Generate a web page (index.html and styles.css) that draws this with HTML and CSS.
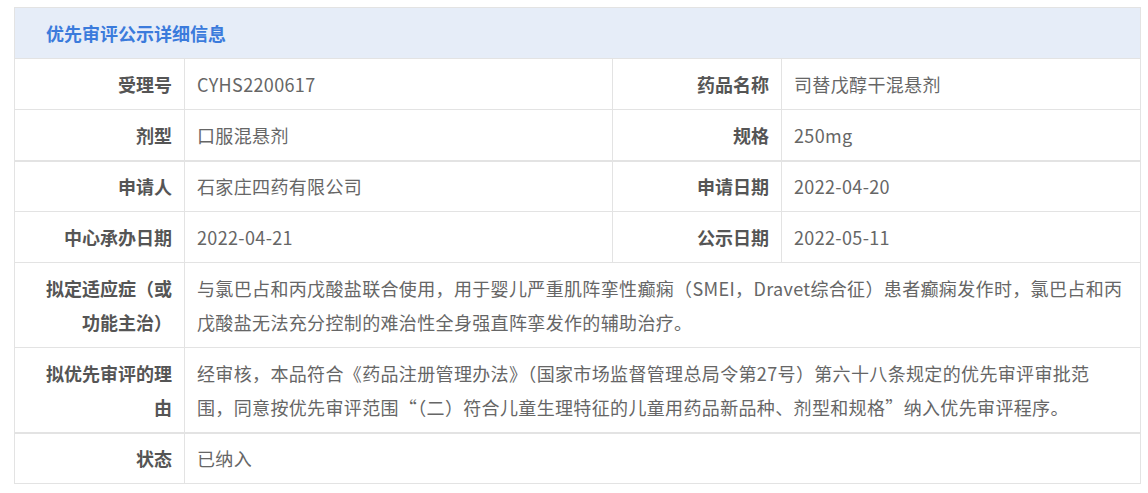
FILE: index.html
```html
<!DOCTYPE html>
<html lang="zh-CN">
<head>
<meta charset="utf-8">
<link rel="stylesheet" href="styles.css">
</head>
<body>
<div class="wrap">
  <table class="info">
    <colgroup>
      <col class="c-label"><col class="c-val"><col class="c-label2"><col>
    </colgroup>
    <thead>
      <tr><th colspan="4" class="title">优先审评公示详细信息</th></tr>
    </thead>
    <tbody>
      <tr>
        <td class="lbl">受理号</td><td class="val">CYHS2200617</td>
        <td class="lbl">药品名称</td><td class="val">司替戊醇干混悬剂</td>
      </tr>
      <tr>
        <td class="lbl">剂型</td><td class="val">口服混悬剂</td>
        <td class="lbl">规格</td><td class="val">250mg</td>
      </tr>
      <tr class="sep">
        <td class="lbl">申请人</td><td class="val">石家庄四药有限公司</td>
        <td class="lbl">申请日期</td><td class="val">2022-04-20</td>
      </tr>
      <tr>
        <td class="lbl">中心承办日期</td><td class="val">2022-04-21</td>
        <td class="lbl">公示日期</td><td class="val">2022-05-11</td>
      </tr>
      <tr>
        <td class="lbl">拟定适应症（或功能主治）</td>
        <td class="val" colspan="3">与氯巴占和丙戊酸盐联合使用，用于婴儿严重肌阵挛性癫痫（SMEI，Dravet综合征）患者癫痫发作时，氯巴占和丙戊酸盐无法充分控制的难治性全身强直阵挛发作的辅助治疗。</td>
      </tr>
      <tr>
        <td class="lbl">拟优先审评的理由</td>
        <td class="val" colspan="3">经审核，本品符合《药品注册管理办法》（国家市场监督管理总局令第27号）第六十八条规定的优先审评审批范围，同意按优先审评范围“（二）符合儿童生理特征的儿童用药品新品种、剂型和规格”纳入优先审评程序。</td>
      </tr>
      <tr class="sep">
        <td class="lbl">状态</td><td class="val" colspan="3">已纳入</td>
      </tr>
    </tbody>
  </table>
</div>
</body>
</html>
```
FILE: styles.css
```css
html, body {
  margin: 0;
  padding: 0;
  background: #ffffff;
}
body {
  font-family: "Noto Sans CJK SC", "Noto Sans", sans-serif;
  font-size: 18px;
}
.wrap {
  padding: 7px 7px 0 14px;
}
.info {
  width: 1127px;
  border-collapse: collapse;
  table-layout: fixed;
  border: 1px solid #e3e3e3;
}
.c-label { width: 170px; }
.c-val { width: 428px; }
.c-label2 { width: 169px; }
.info th, .info td {
  border: 1px solid #e3e3e3;
  line-height: 34px;
  padding: 8px 12px;
  vertical-align: middle;
}
.info .title {
  background: #e6edf8;
  color: #3b7bdc;
  font-weight: bold;
  text-align: left;
  padding-left: 31px;
}
.info .lbl {
  text-align: right;
  font-weight: bold;
  color: #555555;
  padding-right: 12px;
  padding-left: 30px;
}
.info .val {
  color: #666666;
  text-align: left;
  padding-left: 12px;
  padding-right: 16px;
  letter-spacing: 0.35px;
}
.info .sep td {
  border-top: 2px solid #e3e3e3;
  padding-top: 7px;
}
```
